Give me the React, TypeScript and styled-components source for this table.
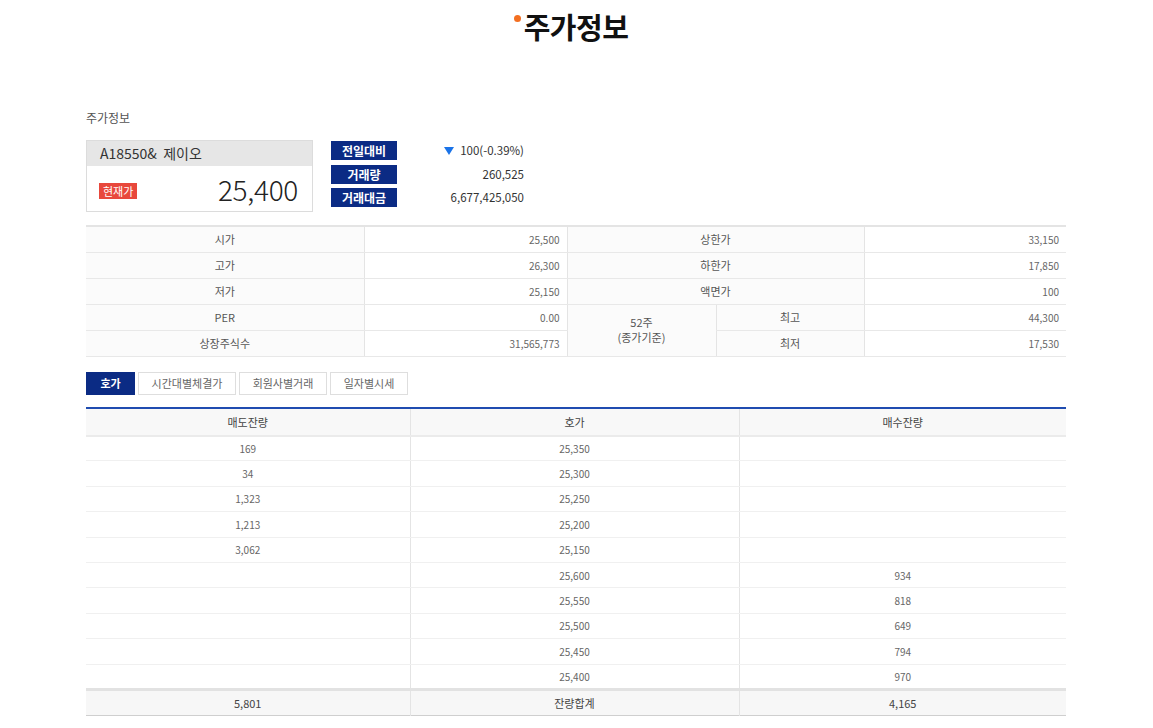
import React from "react";
import styled, { createGlobalStyle } from "styled-components";

const Global = createGlobalStyle`
  html, body { margin: 0; padding: 0; background: #fff; }
  body { font-family: "Noto Sans CJK KR", "Noto Sans", sans-serif; color: #333; }
  * { box-sizing: border-box; }
`;

const Page = styled.div`
  width: 980px;
  margin: 0 0 0 86px;
  padding-bottom: 20px;
`;

const Title = styled.h1`
  margin: 0;
  padding-top: 6px;
  height: 48px;
  text-align: center;
  font-size: 29px;
  font-weight: 700;
  color: #111;
  line-height: 40px;
  letter-spacing: -0.5px;
`;

const TitleText = styled.span`
  position: relative;
  &::before {
    content: "";
    position: absolute;
    left: -10px;
    top: 10px;
    width: 7px;
    height: 7px;
    border-radius: 50%;
    background: #f36f21;
  }
`;

const SectionLabel = styled.div`
  margin-top: 61px;
  font-size: 12px;
  color: #555;
  line-height: 18px;
`;

const Summary = styled.div`
  display: flex;
  align-items: flex-start;
  margin-top: 13px;
`;

const PriceBox = styled.div`
  width: 227px;
  border: 1px solid #dcdcdc;
`;

const PriceHead = styled.div`
  height: 25px;
  background: #e6e6e6;
  padding-left: 13px;
  font-size: 14px;
  line-height: 25px;
  color: #333;
  white-space: pre;
`;

const PriceBody = styled.div`
  height: 45px;
  display: flex;
  align-items: center;
  justify-content: space-between;
  padding: 0 14px 0 12px;
`;

const Badge = styled.span`
  background: #e8483c;
  color: #fff;
  font-size: 11px;
  line-height: 16px;
  padding: 0 4px;
  margin-top: 4px;
`;

const BigPrice = styled.span`
  font-size: 28px;
  font-weight: 300;
  color: #222;
  letter-spacing: -0.3px;
`;

const Stats = styled.div`
  margin-left: 18px;
  display: grid;
  grid-template-columns: 66px 127px;
  row-gap: 4.5px;
  padding-top: 1px;
`;

const StatLabel = styled.div`
  height: 19px;
  background: #0b2b84;
  color: #fff;
  font-size: 12px;
  font-weight: 700;
  line-height: 19px;
  text-align: center;
`;

const StatValue = styled.div`
  height: 19px;
  line-height: 19px;
  font-size: 11.5px;
  color: #333;
  text-align: right;
  display: flex;
  align-items: center;
  justify-content: flex-end;
  gap: 6px;
`;

const Down = styled.span`
  width: 0;
  height: 0;
  border-left: 5px solid transparent;
  border-right: 5px solid transparent;
  border-top: 8px solid #1a73e8;
`;

const InfoTable = styled.table`
  width: 100%;
  margin-top: 13px;
  border-collapse: collapse;
  table-layout: fixed;
  border-top: 2px solid #e4e4e4;
  border-bottom: 1px solid #e4e4e4;
`;

const ITd = styled.td<{ $label?: boolean }>`
  height: 26px;
  padding: 0 7px;
  border-bottom: 1px solid #e8e8e8;
  border-left: 1px solid #e4e4e4;
  background: ${(p) => (p.$label ? "#fbfbfb" : "#fff")};
  text-align: ${(p) => (p.$label ? "center" : "right")};
  font-size: ${(p) => (p.$label ? "11px" : "10px")};
  color: ${(p) => (p.$label ? "#555" : "#666")};
  line-height: 15px;
  vertical-align: middle;
  &:first-child { border-left: none; }
`;

const Tabs = styled.div`
  display: flex;
  gap: 3px;
  margin-top: 15px;
`;

const Tab = styled.div<{ $active?: boolean; $w: number }>`
  width: ${(p) => p.$w}px;
  height: 23px;
  line-height: 21px;
  text-align: center;
  font-size: 11px;
  border: 1px solid ${(p) => (p.$active ? "#0b2b84" : "#dedede")};
  background: ${(p) => (p.$active ? "#0b2b84" : "#fff")};
  color: ${(p) => (p.$active ? "#fff" : "#666")};
  font-weight: ${(p) => (p.$active ? 700 : 400)};
`;

const OrderTable = styled.table`
  width: 100%;
  margin-top: 12px;
  border-collapse: collapse;
  table-layout: fixed;
  border-top: 2px solid #1f4cb0;
  border-bottom: 1px solid #cfcfcf;
`;

const OTh = styled.th`
  height: 28px;
  background: #f8f8f8;
  font-weight: 400;
  font-size: 11px;
  color: #444;
  border-bottom: 2px solid #ebebeb;
  border-left: 1px solid #e4e4e4;
  &:first-child { border-left: none; }
`;

const OTd = styled.td<{ $sum?: boolean }>`
  height: ${(p) => (p.$sum ? "26px" : "25.4px")};
  text-align: center;
  font-size: ${(p) => (p.$sum ? "11px" : "10px")};
  font-weight: 400;
  color: ${(p) => (p.$sum ? "#444" : "#666")};
  background: ${(p) => (p.$sum ? "#f7f7f7" : "#fff")};
  border-top: ${(p) => (p.$sum ? "3px solid #e2e2e2" : "none")};
  border-bottom: ${(p) => (p.$sum ? "none" : "1px solid #f0f0f0")};
  border-left: 1px solid #e4e4e4;
  &:first-child { border-left: none; }
`;

const infoRows: [string, string, string, string][] = [
  ["시가", "25,500", "상한가", "33,150"],
  ["고가", "26,300", "하한가", "17,850"],
  ["저가", "25,150", "액면가", "100"],
];

const book: [string, string, string][] = [
  ["169", "25,350", ""],
  ["34", "25,300", ""],
  ["1,323", "25,250", ""],
  ["1,213", "25,200", ""],
  ["3,062", "25,150", ""],
  ["", "25,600", "934"],
  ["", "25,550", "818"],
  ["", "25,500", "649"],
  ["", "25,450", "794"],
  ["", "25,400", "970"],
];

export default function App() {
  return (
    <Page>
      <Global />
      <Title>
        <TitleText>주가정보</TitleText>
      </Title>
      <SectionLabel>주가정보</SectionLabel>
      <Summary>
        <PriceBox>
          <PriceHead>{"A18550&  제이오"}</PriceHead>
          <PriceBody>
            <Badge>현재가</Badge>
            <BigPrice>25,400</BigPrice>
          </PriceBody>
        </PriceBox>
        <Stats>
          <StatLabel>전일대비</StatLabel>
          <StatValue>
            <Down />
            100(-0.39%)
          </StatValue>
          <StatLabel>거래량</StatLabel>
          <StatValue>260,525</StatValue>
          <StatLabel>거래대금</StatLabel>
          <StatValue>6,677,425,050</StatValue>
        </Stats>
      </Summary>

      <InfoTable>
        <colgroup>
          <col style={{ width: 278 }} />
          <col style={{ width: 203 }} />
          <col style={{ width: 149 }} />
          <col style={{ width: 148 }} />
          <col style={{ width: 202 }} />
        </colgroup>
        <tbody>
          {infoRows.map((r) => (
            <tr key={r[0]}>
              <ITd $label>{r[0]}</ITd>
              <ITd>{r[1]}</ITd>
              <ITd $label colSpan={2}>{r[2]}</ITd>
              <ITd>{r[3]}</ITd>
            </tr>
          ))}
          <tr>
            <ITd $label>PER</ITd>
            <ITd>0.00</ITd>
            <ITd $label rowSpan={2}>
              52주
              <br />
              (종가기준)
            </ITd>
            <ITd $label>최고</ITd>
            <ITd>44,300</ITd>
          </tr>
          <tr>
            <ITd $label>상장주식수</ITd>
            <ITd>31,565,773</ITd>
            <ITd $label>최저</ITd>
            <ITd>17,530</ITd>
          </tr>
        </tbody>
      </InfoTable>

      <Tabs>
        <Tab $active $w={49}>호가</Tab>
        <Tab $w={98}>시간대별체결가</Tab>
        <Tab $w={88}>회원사별거래</Tab>
        <Tab $w={78}>일자별시세</Tab>
      </Tabs>

      <OrderTable>
        <colgroup>
          <col style={{ width: 324 }} />
          <col style={{ width: 329 }} />
          <col style={{ width: 327 }} />
        </colgroup>
        <thead>
          <tr>
            <OTh>매도잔량</OTh>
            <OTh>호가</OTh>
            <OTh>매수잔량</OTh>
          </tr>
        </thead>
        <tbody>
          {book.map((r, i) => (
            <tr key={i}>
              <OTd>{r[0]}</OTd>
              <OTd>{r[1]}</OTd>
              <OTd>{r[2]}</OTd>
            </tr>
          ))}
          <tr>
            <OTd $sum>5,801</OTd>
            <OTd $sum>잔량합계</OTd>
            <OTd $sum>4,165</OTd>
          </tr>
        </tbody>
      </OrderTable>
    </Page>
  );
}
